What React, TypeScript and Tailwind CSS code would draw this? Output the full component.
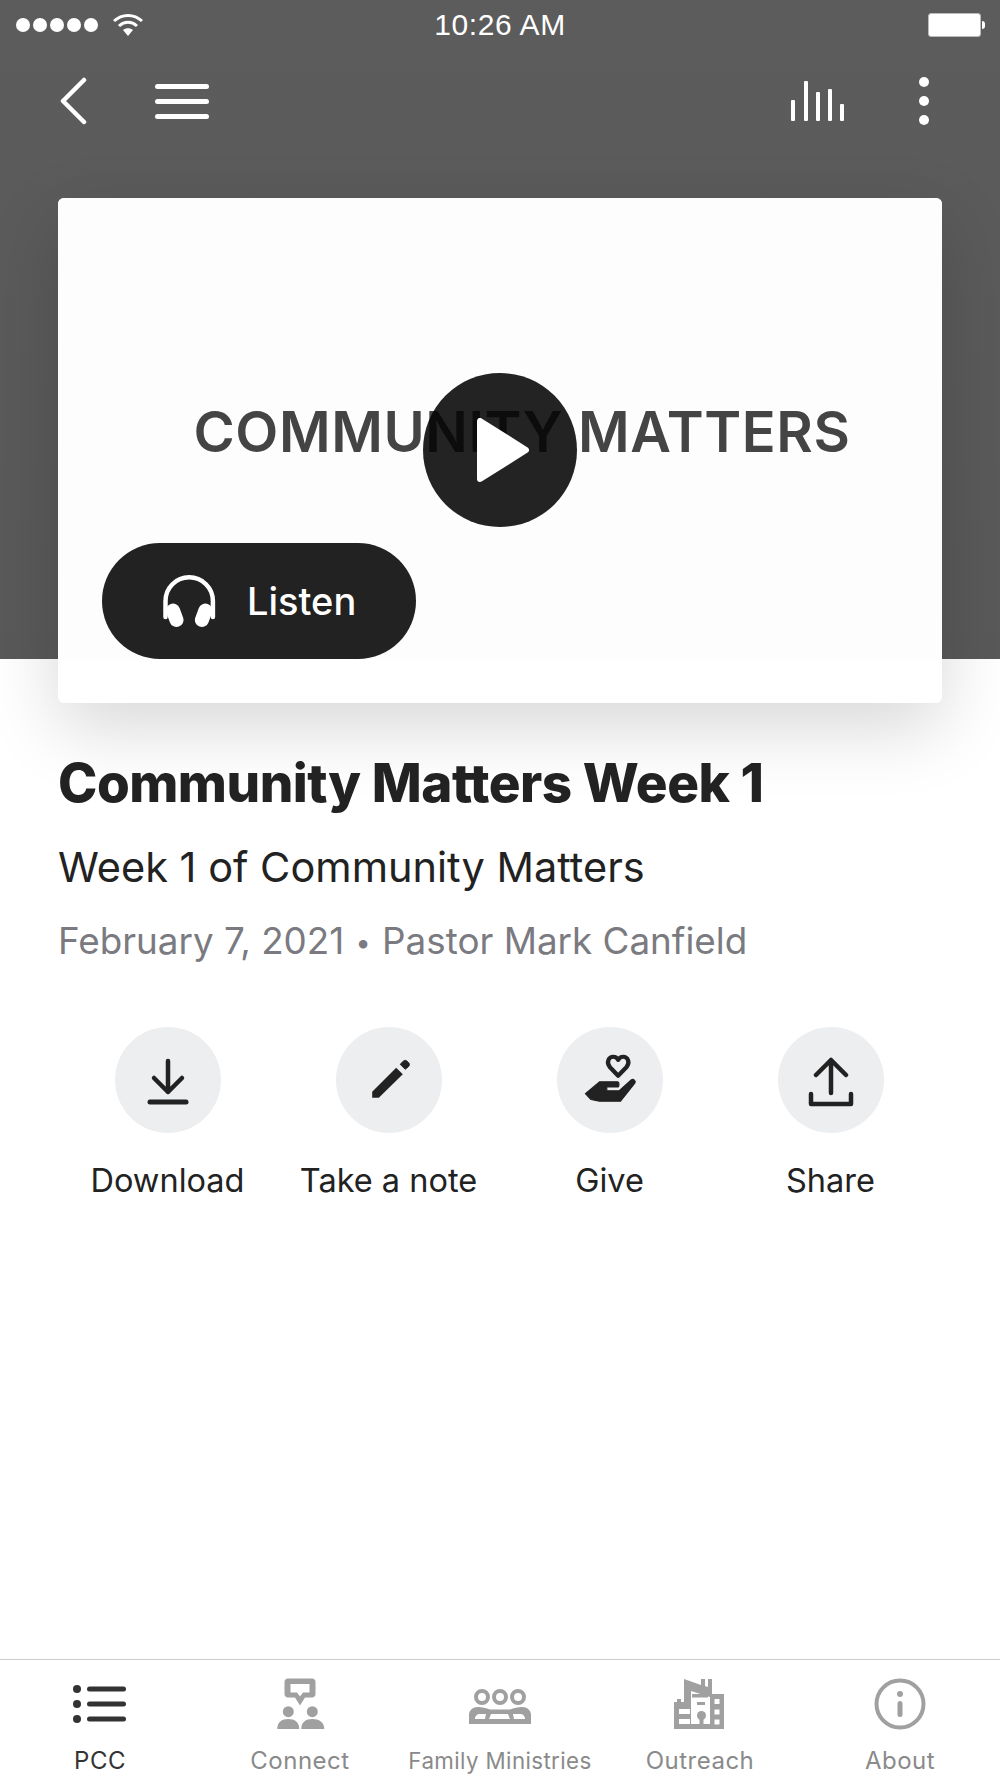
import React from 'react';

const inter = 'font-["Inter",sans-serif]';

const StatusBar = () => (
  <div className="relative h-[50px] flex items-center justify-between pl-4 pr-[15px] text-white">
    <div className="flex items-center">
      <div className="flex gap-[3px]">
        {[1, 2, 3, 4, 5].map(i => <div key={i} className="w-[14px] h-[14px] rounded-full bg-white" />)}
      </div>
      <svg width="32" height="24" viewBox="0 0 32 24" className="ml-[14px]" fill="none" stroke="white" strokeWidth="3">
        <path d="M2 8c8-7.500 20-7.500 28 0" />
        <path d="M7 13c5.500-5 12.500-5 18 0" />
        <path d="M16 23l-5-6c3-2.500 7-2.500 10 0z" fill="white" stroke="none" />
      </svg>
    </div>
    <span className='absolute left-0 right-0 text-center font-["Liberation_Sans",sans-serif] text-[30px] tracking-[0.6px] leading-none pointer-events-none'>10:26 AM</span>
    <div className="flex items-center">
      <div className="w-[53px] h-[24px] rounded-[3px] bg-white border border-[#bbb]" />
      <div className="w-[3px] h-[8px] bg-white rounded-r-full ml-[1px]" />
    </div>
  </div>
);

const TopNav = () => (
  <div className="h-[102px] pl-[60px] pr-[71px] flex items-center justify-between">
    <div className="flex items-center gap-[68px]">
      <svg width="27" height="48" viewBox="0 0 27 48" fill="none" stroke="white" strokeWidth="4.500" strokeLinecap="round" strokeLinejoin="round">
        <path d="M24 3L3 24l21 21" />
      </svg>
      <div className="flex flex-col gap-[10px]">
        {[1, 2, 3].map(i => <div key={i} className="w-[54px] h-[5px] rounded-full bg-white" />)}
      </div>
    </div>
    <div className="flex items-center gap-[73px]">
      <svg width="56" height="42" viewBox="0 0 56 42" fill="white">
        <rect x="1" y="20" width="4" height="21" rx="1" />
        <rect x="14" y="1" width="4" height="40" rx="1" />
        <rect x="26" y="12" width="4" height="29" rx="1" />
        <rect x="38" y="9" width="4" height="32" rx="1" />
        <rect x="50" y="24" width="4" height="17" rx="1" />
      </svg>
      <div className="flex flex-col gap-[9px]">
        {[1, 2, 3].map(i => <div key={i} className="w-[10px] h-[10px] rounded-full bg-white" />)}
      </div>
    </div>
  </div>
);

const MediaCard = () => (
  <div className="relative mt-[46px] mx-[58px] h-[505px] bg-white rounded-[6px] shadow-[0_24px_72px_rgba(0,0,0,0.16)] overflow-hidden">
    <div className="h-[461px] bg-[#fdfdfd] flex items-center justify-center pl-[44px] pt-[6px]">
      <span className={`${inter} text-[56px] font-semibold leading-none text-[#444] tracking-[0.6px] whitespace-nowrap`}>COMMUNITY MATTERS</span>
    </div>
    {/* play button sits over the artwork */}
    <div className="absolute left-[365px] top-[175px] w-[154px] h-[154px] rounded-full bg-[rgba(4,4,4,0.88)] flex items-center justify-center">
      <svg width="52" height="64" viewBox="0 0 52 64" className="ml-[5px]" fill="white" stroke="white" strokeWidth="6" strokeLinejoin="round">
        <path d="M3 3v58l46-29z" />
      </svg>
    </div>
    <button className="absolute left-[44px] top-[345px] w-[314px] h-[116px] rounded-full bg-[#222] text-white flex items-center pl-[60px] gap-[31px]">
      <svg width="54" height="54" viewBox="11 9 54 54" fill="none" stroke="white" strokeLinecap="round">
        <path d="M14.500 52V36a23.700 23.700 0 0 1 47.400 0v16" strokeWidth="4.500" />
        <path d="M22 45.500l3.500 9.500M54.400 45.500l-3.500 9.500" strokeWidth="14" />
      </svg>
      <span className={`${inter} text-[38px] font-medium leading-none`}>Listen</span>
    </button>
  </div>
);

const actionIcons: Record<string, React.ReactNode> = {
  Download: (
    <svg width="44" height="50" viewBox="0 0 44 50" className="mt-[2px]" fill="none" stroke="#222" strokeWidth="4.500" strokeLinecap="round" strokeLinejoin="round">
      <path d="M22 5v31M8 22l14 14 14-14" />
      <path d="M4 46h36" strokeWidth="5" />
    </svg>
  ),
  'Take a note': (
    <svg width="70" height="70" viewBox="-5.500 0 70 70" fill="#222">
      <path d="M12.700 46.700L36.700 22.700l6.600 6.600-24 23.400h-6.600z" />
      <path d="M40.700 19.300l2.800-2.800c1.500-1.500 3-1.500 4.500 0l.8.800c1.500 1.500 1.500 3 0 4.500l-3.100 2.500z" stroke="#222" strokeWidth="1" strokeLinejoin="round" />
    </svg>
  ),
  Give: (
    <svg width="74" height="74" viewBox="0 0 70 70">
      <path d="M42.700 31L35 23C31 18 34 13 38 13c2.500 0 4 1.500 4.700 3 .8-1.500 2.300-3 4.800-3 4 0 7 5 3 10z" fill="none" stroke="#222" strokeWidth="4" strokeLinejoin="round" />
      <path d="M11.700 48L25 36.700h17c2 0 2 5 0 5H32v3.500h11.500L55 35c2-1.700 5 1 3.500 3L45 55H25l-8-1.500z" fill="#222" stroke="#222" strokeWidth="1" strokeLinejoin="round" />
    </svg>
  ),
  Share: (
    <svg width="46" height="50" viewBox="0 0 46 50" className="mt-[3px]" fill="none" stroke="#222" strokeWidth="4.500" strokeLinecap="round" strokeLinejoin="round">
      <path d="M23 36V3M8 18L23 3l15 15" />
      <path d="M3 37v10h40V37" />
    </svg>
  ),
};

const ActionButton = ({ label }: { label: string }) => (
  <div className="flex flex-col items-center">
    <div className="w-[106px] h-[106px] rounded-full bg-[#edeef0] flex items-center justify-center">
      {actionIcons[label]}
    </div>
    <span className={`${inter} mt-[28px] text-[32.500px] leading-[40px] text-[#222] whitespace-nowrap`}>{label}</span>
  </div>
);

const gray = '#a0a0a0';
const tabs: { label: string; icon: React.ReactNode; active?: boolean; small?: boolean }[] = [
  {
    label: 'PCC',
    active: true,
    icon: (
      <svg width="56" height="56" viewBox="0 0 56 56" fill="#333">
        <circle cx="5" cy="13" r="4" /><circle cx="5" cy="28" r="4" /><circle cx="5" cy="43" r="4" />
        <rect x="15" y="10.500" width="39" height="5" rx="2.500" />
        <rect x="15" y="25.500" width="39" height="5" rx="2.500" />
        <rect x="15" y="40.500" width="39" height="5" rx="2.500" />
      </svg>
    ),
  },
  {
    label: 'Connect',
    icon: (
      <svg width="56" height="56" viewBox="2 7 56 56" fill={gray}>
        <path fillRule="evenodd" d="M18 9.500h24c2 0 3.500 1.500 3.500 3.500v12c0 2-1.500 3.500-3.500 3.500h-7l-5 8-5-8h-7c-2 0-3.500-1.500-3.500-3.500V13c0-2 1.500-3.500 3.500-3.500zM20.500 15v8.500h6.500l3 4 3-4h6.500V15z" />
        <circle cx="18.300" cy="42.700" r="5.500" /><circle cx="42.300" cy="42.700" r="5.500" />
        <path d="M7.300 60c0-7 4.500-10 11-10s11 3 11 10zM31.300 60c0-7 4.500-10 11-10s12 3 12 10z" />
      </svg>
    ),
  },
  {
    label: 'Family Ministries',
    small: true,
    icon: (
      <svg width="62" height="56" viewBox="19 7 62 56" fill="none">
        <circle cx="32" cy="28" r="6" stroke={gray} strokeWidth="4" />
        <circle cx="50" cy="28" r="6" stroke={gray} strokeWidth="4" />
        <circle cx="68" cy="28" r="6" stroke={gray} strokeWidth="4" />
        <path fillRule="evenodd" fill={gray} d="M19 55V46c0-5 4-8 9-8 4 0 8 1 12 2.500h20C64 39 68 38 72 38c5 0 9 3 9 8v9zM25 50h10l1-5h-6c-3 0-5 2-5 5zm14 0h21l-2-5H41zm25 0h11c0-3-2-5-5-5h-7z" />
      </svg>
    ),
  },
  {
    label: 'Outreach',
    icon: (
      <svg width="56" height="56" viewBox="12 7 56 56" fill={gray}>
        <path fillRule="evenodd" d="M24 10l17 6v-6h4v7l3 1v-8h4v15h12v35H14V33h3v-3h4v3h3zm-5 30v5h11v-5zm0 10v5h11v-5zm35.500-20v5h5v-5zm0 10.500v5h5v-5zm0 10v5h5v-5z" />
        <path d="M31 22l19 6v27H31z" fill="white" />
        <rect x="32" y="25" width="16" height="3.500" />
        <rect x="37" y="33" width="8" height="3" />
        <circle cx="41.500" cy="46.500" r="4.500" />
        <rect x="39.500" y="46" width="4" height="12" />
      </svg>
    ),
  },
  {
    label: 'About',
    icon: (
      <svg width="56" height="56" viewBox="0 0 56 56" fill="none">
        <circle cx="28" cy="28" r="23.500" stroke={gray} strokeWidth="4" />
        <circle cx="28" cy="18" r="3" fill={gray} />
        <rect x="25.500" y="25" width="5" height="16" rx="2.500" fill={gray} />
      </svg>
    ),
  },
];

export default function App() {
  return (
    <div className={`${inter} w-[1000px] min-h-[1778px] bg-white flex flex-col overflow-hidden`}>
      <div className="h-[659px] bg-gradient-to-b from-[#5c5c5c] to-[#595959]">
        <StatusBar />
        <TopNav />
        <MediaCard />
      </div>

      <div className="relative pl-[58px] pt-[92px]">
        <h1 className="text-[53px] leading-[64px] font-extrabold text-[#222] tracking-[-0.5px]">Community Matters Week 1</h1>
        <p className="mt-[27px] text-[41.500px] leading-[50px] text-[#222]">Week 1 of Community Matters</p>
        <p className="mt-[25px] text-[36.800px] leading-[48px] text-[#7a7a80]">February 7, 2021 <span className="text-[27px] align-[2px] mx-[1px]">•</span> Pastor Mark Canfield</p>
      </div>

      <div className="grid grid-cols-4 ml-[57px] mr-[59px] mt-[60px]">
        {['Download', 'Take a note', 'Give', 'Share'].map(label => <ActionButton key={label} label={label} />)}
      </div>

      <div className="flex-1" />

      <div className="h-[119px] border-t border-[#ccc] grid grid-cols-5">
        {tabs.map(t => (
          <div key={t.label} className="flex flex-col items-center pt-[16px]">
            <div className="h-[56px] flex items-center">{t.icon}</div>
            <span className={`mt-[15px] leading-[28px] whitespace-nowrap ${t.small ? 'text-[22.300px] tracking-[0.4px]' : 'text-[24px] tracking-[0.5px]'} ${t.active ? 'text-[#333]' : 'text-[#8a8a8a]'}`}>{t.label}</span>
          </div>
        ))}
      </div>
    </div>
  );
}
